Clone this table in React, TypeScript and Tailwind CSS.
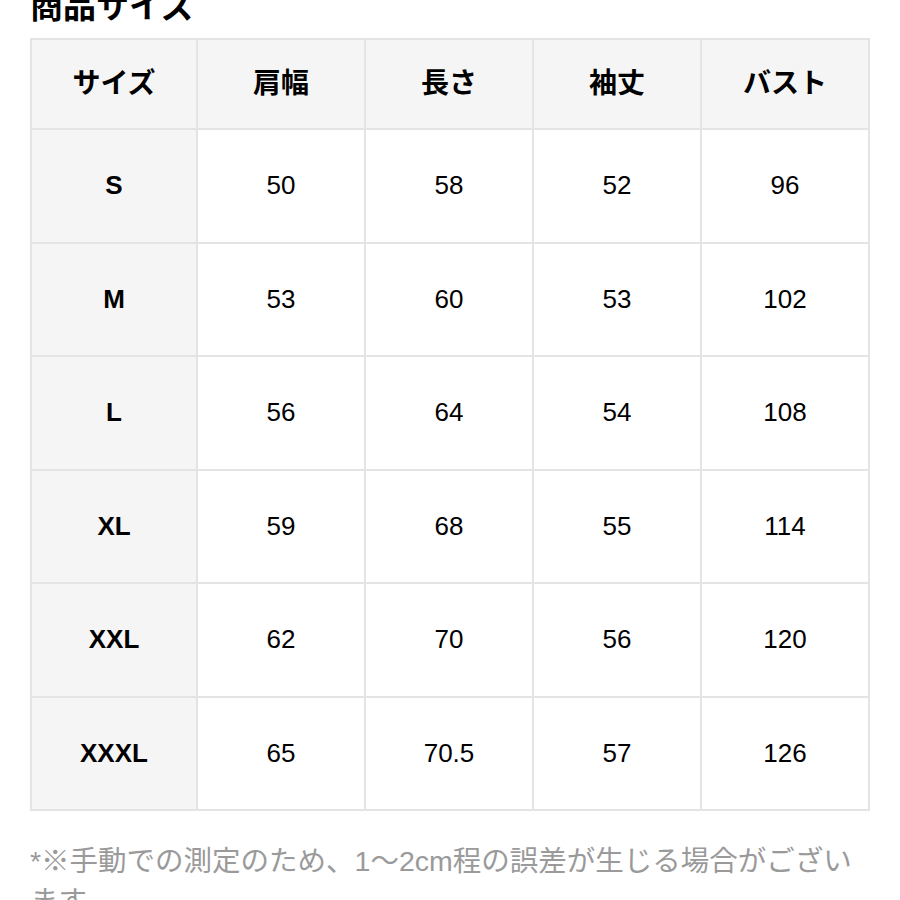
import React from 'react';

const headers = ['サイズ', '肩幅', '長さ', '袖丈', 'バスト'];

const rows: [string, string, string, string, string][] = [
  ['S', '50', '58', '52', '96'],
  ['M', '53', '60', '53', '102'],
  ['L', '56', '64', '54', '108'],
  ['XL', '59', '68', '55', '114'],
  ['XXL', '62', '70', '56', '120'],
  ['XXXL', '65', '70.5', '57', '126'],
];

export default function App() {
  return (
    <div
      className="w-[900px] h-[900px] overflow-hidden bg-white px-[30px] text-black"
      style={{ fontFamily: '"Liberation Sans", "Noto Sans CJK JP", sans-serif' }}
    >
      {/* タイトル */}
      <h2 className="-mt-[10px] h-[48px] text-[33px] leading-[33px] font-bold">商品サイズ</h2>

      {/* サイズ表 */}
      <table className="w-[840px] table-fixed border-collapse border-2 border-[#e4e4e4]">
        <colgroup>
          <col className="w-[166px]" />
          <col />
          <col />
          <col />
          <col />
        </colgroup>
        <thead>
          <tr className="h-[90px] bg-[#f5f5f5]">
            {headers.map((h) => (
              <th key={h} className="border-2 border-[#e4e4e4] text-[28px] font-bold text-center">
                {h}
              </th>
            ))}
          </tr>
        </thead>
        <tbody>
          {rows.map((r) => (
            <tr key={r[0]} className="h-[113.5px]">
              <td className="border-2 border-[#e4e4e4] bg-[#f5f5f5] text-center text-[26px] font-bold">
                {r[0]}
              </td>
              {r.slice(1).map((v, i) => (
                <td key={i} className="border-2 border-[#e4e4e4] text-center text-[26px]">
                  {v}
                </td>
              ))}
            </tr>
          ))}
        </tbody>
      </table>

      {/* 注意書き */}
      <p className="mt-[30px] text-[28.5px] leading-[40px] text-[#9a9a9a]">
        *※手動での測定のため、1〜2cm程の誤差が生じる場合がございます。
      </p>
    </div>
  );
}
